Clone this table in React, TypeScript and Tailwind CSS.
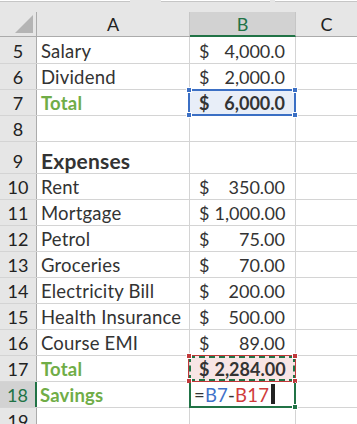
import React from "react";

const FONT = { fontFamily: "Lato, 'Open Sans', sans-serif" };

type Row = {
  n: number;
  a?: string;
  aKind?: "green" | "bold";
  b?: [string, string];
  bKind?: "sel" | "copy" | "formula";
  h: string;
};

const rows: Row[] = [
  { n: 5, a: "Salary", b: ["$", "4,000.0"], h: "h-[27px]" },
  { n: 6, a: "Dividend", b: ["$", "2,000.0"], h: "h-[26px]" },
  { n: 7, a: "Total", aKind: "green", b: ["$", "6,000.0"], bKind: "sel", h: "h-[26px]" },
  { n: 8, h: "h-[26px]" },
  { n: 9, a: "Expenses", aKind: "bold", h: "h-[32px]" },
  { n: 10, a: "Rent", b: ["$", "350.00"], h: "h-[26px]" },
  { n: 11, a: "Mortgage", b: ["$", "1,000.00"], h: "h-[26px]" },
  { n: 12, a: "Petrol", b: ["$", "75.00"], h: "h-[26px]" },
  { n: 13, a: "Groceries", b: ["$", "70.00"], h: "h-[26px]" },
  { n: 14, a: "Electricity Bill", b: ["$", "200.00"], h: "h-[26px]" },
  { n: 15, a: "Health Insurance", b: ["$", "500.00"], h: "h-[26px]" },
  { n: 16, a: "Course EMI", b: ["$", "89.00"], h: "h-[26px]" },
  { n: 17, a: "Total", aKind: "green", b: ["$", "2,284.00"], bKind: "copy", h: "h-[26px]" },
  { n: 18, a: "Savings", aKind: "green", bKind: "formula", h: "h-[26px]" },
  { n: 19, h: "h-[26px]" },
];

function Handle({ pos, color }: { pos: string; color: string }) {
  return <div className={`absolute w-[6px] h-[6px] ${pos} ${color} border border-white`} />;
}

function BCell({ r }: { r: Row }) {
  if (r.bKind === "sel") {
    return (
      <div className="relative w-[106px] border-r border-[#d4d4d4] bg-[#e8eef8]">
        <div className="absolute -left-[2px] -top-[1px] -right-[1px] -bottom-[1px] border-2 border-[#3b6fc4]" />
        <Handle pos="-left-[4px] -top-[3px]" color="bg-[#3b6fc4]" />
        <Handle pos="-right-[3px] -top-[3px]" color="bg-[#3b6fc4]" />
        <Handle pos="-left-[4px] -bottom-[3px]" color="bg-[#3b6fc4]" />
        <Handle pos="-right-[3px] -bottom-[3px]" color="bg-[#3b6fc4]" />
        <div className="relative h-full flex items-end justify-between gap-[5px] pl-[9px] pr-[10px] pb-[1px] font-bold text-[#333]">
          <span>{r.b![0]}</span>
          <span>{r.b![1]}</span>
        </div>
      </div>
    );
  }
  if (r.bKind === "copy") {
    return (
      <div className="relative w-[106px] border-r border-[#d4d4d4] bg-[#f8e5e5]">
        <div className="absolute -left-[2px] -top-[1px] -right-[1px] -bottom-[1px] border border-[#c0393b]" />
        <div className="absolute -left-[1px] top-0 right-0 bottom-0 border-2 border-dashed border-[#217346]" />
        <Handle pos="-left-[4px] -top-[3px]" color="bg-[#c0393b]" />
        <Handle pos="-right-[3px] -top-[3px]" color="bg-[#c0393b]" />
        <Handle pos="-left-[4px] -bottom-[3px]" color="bg-[#c0393b]" />
        <Handle pos="-right-[3px] -bottom-[3px]" color="bg-[#c0393b]" />
        <div className="relative h-full flex items-end justify-between gap-[5px] pl-[9px] pr-[10px] pb-[1px] font-bold text-[#333]">
          <span>{r.b![0]}</span>
          <span>{r.b![1]}</span>
        </div>
      </div>
    );
  }
  if (r.bKind === "formula") {
    return (
      <div className="relative w-[106px] border-r border-[#d4d4d4]">
        <div className="absolute -left-[1px] top-[1px] -right-[1px] -bottom-[1px] border-2 border-t-0 border-[#217346]" />
        <div className="absolute -right-[3px] -bottom-[3px] w-[6px] h-[6px] bg-[#217346] border border-white" />
        <div className="relative h-full flex items-end pl-[4px] pb-[1px] text-[18.5px] tracking-[0.2px]">
          <span className="text-[#333]">=</span>
          <span className="text-[#3f72c9]">B7</span>
          <span className="text-[#333]">-</span>
          <span className="text-[#d03b3b]">B17</span>
          <span className="inline-block w-[4px] h-[20px] bg-[#222] ml-[2px] mb-[2px]" />
        </div>
      </div>
    );
  }
  return (
    <div className="w-[106px] border-r border-[#d4d4d4] flex items-end justify-between gap-[5px] pl-[9px] pr-[10px] pb-[1px] text-[#333]">
      {r.b ? (
        <>
          <span>{r.b[0]}</span>
          <span>{r.b[1]}</span>
        </>
      ) : null}
    </div>
  );
}

export default function App() {
  return (
    <div className="w-[357px] h-[424px] overflow-hidden bg-white text-[18px] leading-[22px]" style={FONT}>
      {/* top strip */}
      <div className="h-[12px] bg-[#e6e6e6] flex gap-0">
        <div className="w-[130px] h-[2px] bg-white border-b border-[#c6c6c6]" />
        <div className="w-[31px]" />
        <div className="w-[109px] h-[2px] bg-white border-b border-[#c6c6c6]" />
        <div className="w-[5px]" />
        <div className="flex-1 h-[2px] bg-white border-b border-[#c6c6c6]" />
      </div>
      {/* column header */}
      <div className="flex h-[25px] bg-[#e6e6e6] border-b border-[#ababab]">
        <div className="w-[37px] border-r border-[#ababab] relative">
          <svg className="absolute left-[15px] top-[3px]" width="18" height="18" viewBox="0 0 18 18">
            <polygon points="18,0 18,18 0,18" fill="#b4b4b4" />
          </svg>
        </div>
        <div className="w-[153px] border-r border-[#c6c6c6] flex items-end justify-center pb-[1px] text-[#222]">A</div>
        <div className="w-[106px] border-r border-[#c6c6c6] bg-[#d2d2d2] flex items-end justify-center pb-[0px] text-[#217346] border-b-2 border-b-[#217346] -mb-[1px]">B</div>
        <div className="flex-1 flex items-end justify-center pb-[1px] text-[#222]">C</div>
      </div>
      {rows.map((r) => {
        const active = r.n === 18;
        return (
          <div key={r.n} className={`flex ${r.h} border-b border-[#d4d4d4]`}>
            <div
              className={`w-[37px] flex items-end justify-center pb-[1px] border-r ${
                active
                  ? "bg-[#d2d2d2] text-[#217346] border-r-2 border-r-[#217346]"
                  : "bg-[#e6e6e6] text-[#222] border-[#ababab]"
              }`}
            >
              {r.n}
            </div>
            <div
              className={`w-[153px] border-r border-[#d4d4d4] flex items-end pl-[4px] pb-[1px] whitespace-nowrap tracking-[0.2px] ${
                r.aKind === "green"
                  ? "font-bold text-[18.5px] text-[#70ad47]"
                  : r.aKind === "bold"
                  ? "font-bold text-[21px] text-[#333]"
                  : "text-[18.5px] text-[#333]"
              } ${active ? "-ml-[1px] w-[154px]" : ""}`}
            >
              {r.a}
            </div>
            <BCell r={r} />
            <div className="flex-1" />
          </div>
        );
      })}
    </div>
  );
}
